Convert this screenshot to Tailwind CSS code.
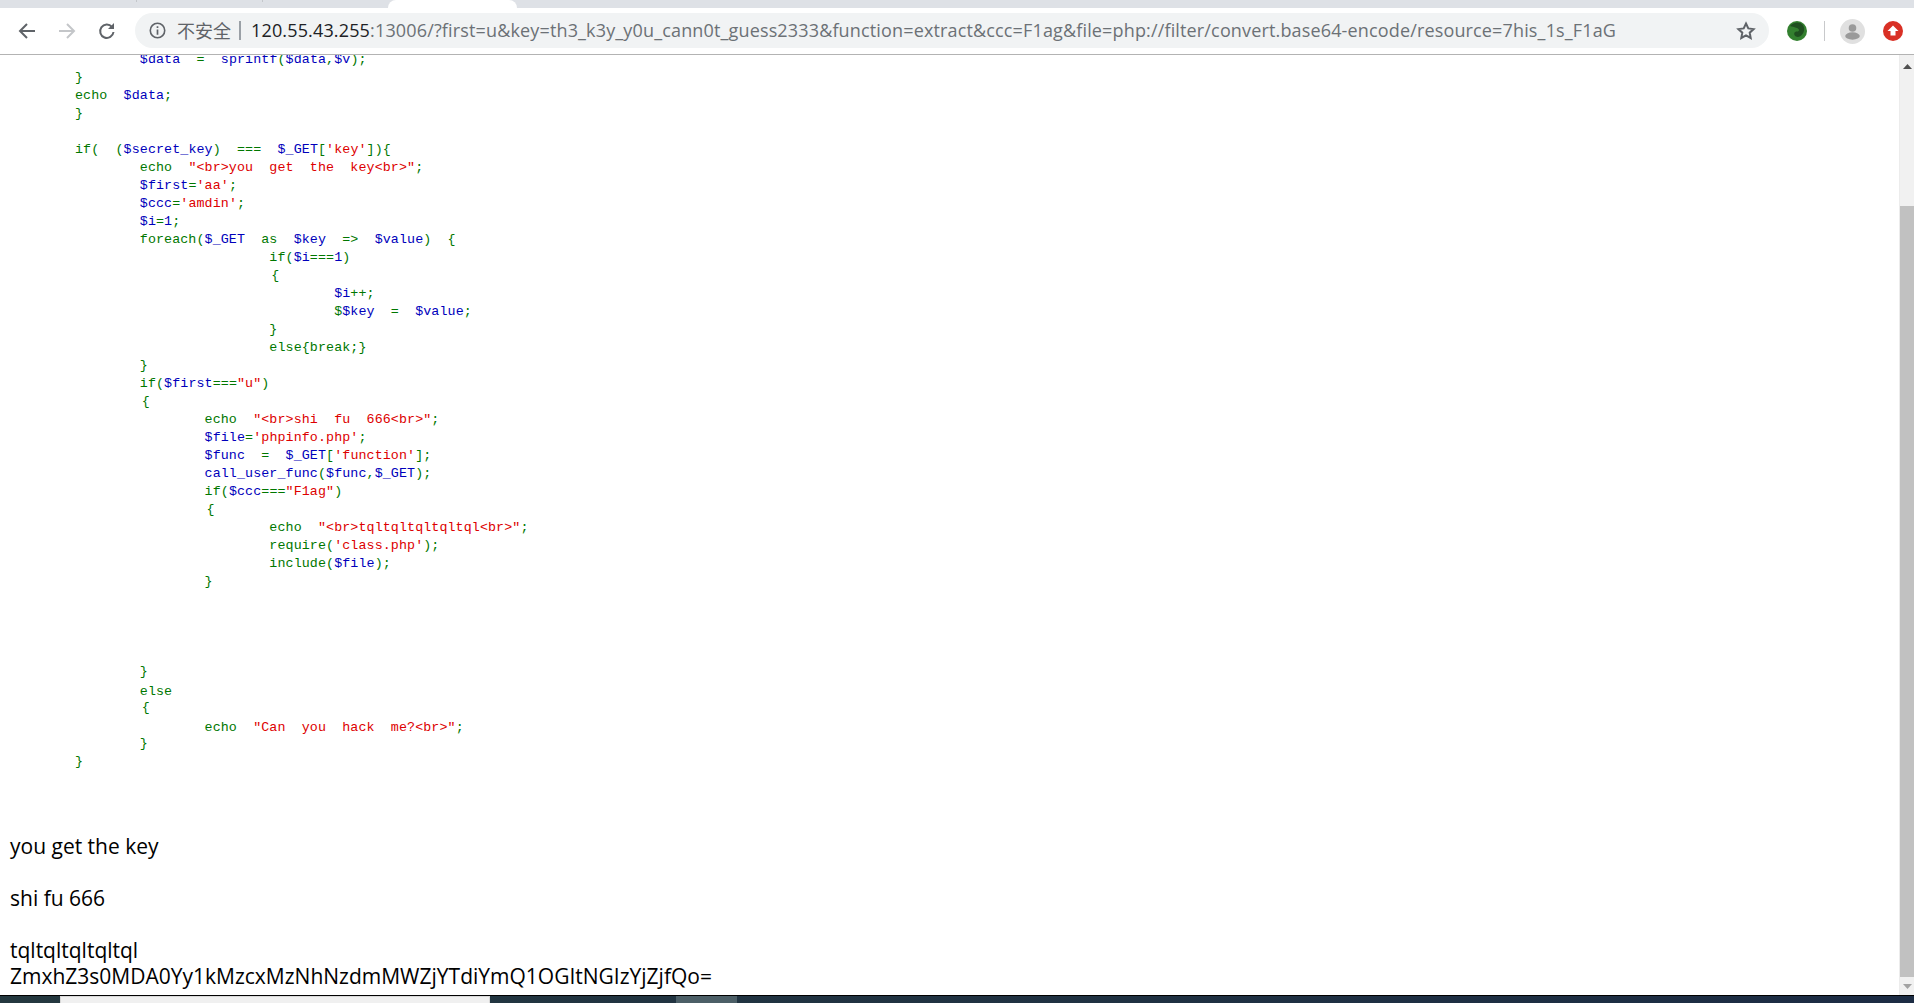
<!DOCTYPE html>
<html>

<head>
    <title>120.55.43.255:13006</title>
    <meta charset="utf-8">
    <script src="https://cdn.jsdelivr.net/npm/@tailwindcss/browser@4"></script>
</head>

<body class="bg-white h-[1003px] w-[1914px] overflow-hidden flex flex-col">
    <!-- tab strip -->
    <div class="h-[8px] bg-[#dee1e6] flex shrink-0">
        <div class="w-[137px] h-[2px] border-r border-[#c4c7cb]"></div>
        <div class="w-[126px] h-[2px] border-r border-[#c4c7cb]"></div>
        <div class="w-[125px]"></div>
        <div class="w-[129px] bg-white rounded-t-lg"></div>
    </div>

    <!-- toolbar -->
    <div class="h-[47px] shrink-0 bg-white border-b border-[#b3b3b3] flex items-start pt-[5px] pl-[17px]">
        <svg class="w-[20px] h-[20px] mt-[8px]" viewBox="0 0 20 20" fill="none" stroke="#5f6368" stroke-width="2"><path d="M18 10H3M10 3l-7 7 7 7"/></svg>
        <svg class="w-[20px] h-[20px] mt-[8px] ml-[20px]" viewBox="0 0 20 20" fill="none" stroke="#c4c6c9" stroke-width="2"><path d="M2 10h15M10 3l7 7-7 7"/></svg>
        <svg class="w-[20px] h-[20px] mt-[8px] ml-[20px]" viewBox="0 0 20 20" fill="none" stroke="#5f6368" stroke-width="2"><path d="M16.5 11a6.7 6.7 0 1 1-1.6-5.2"/><path d="M17 2v6h-6" fill="#5f6368" stroke="none"/></svg>
        <div class="ml-[18px] w-[1634px] h-[35px] rounded-full bg-[#f1f3f4] flex items-center pl-[14px] pr-[13px]">
            <svg class="w-[17px] h-[17px] shrink-0" viewBox="0 0 16 16" fill="none"><circle cx="8" cy="8" r="6.8" stroke="#5f6368" stroke-width="1.5"/><path d="M8 4v1.7M8 7v5" stroke="#5f6368" stroke-width="1.6"/></svg>
            <span class="ml-[11px] text-[18px] text-[#5f6368] font-['Noto_Sans_CJK_SC',sans-serif]">不安全</span>
            <span class="ml-[8px] w-[2px] h-[19px] bg-[#9aa0a6]"></span>
            <span class="ml-[10px] text-[18px] tracking-[0.15px] whitespace-nowrap font-['Open_Sans',sans-serif] text-[#6c7176]"><span class="text-[#202124]">120.55.43.255</span>:13006/?first=u&amp;key=th3_k3y_y0u_cann0t_guess2333&amp;function=extract&amp;ccc=F1ag&amp;file=php://filter/convert.base64-encode/resource=7his_1s_F1aG</span>
            <svg class="w-[20px] h-[20px] ml-auto" viewBox="0 0 20 20" fill="none" stroke="#5f6368" stroke-width="2"><path d="M10 2.5l2.3 4.9 5.3.7-3.9 3.6 1 5.3-4.7-2.6-4.7 2.6 1-5.3-3.9-3.6 5.3-.7z"/></svg>
        </div>
        <svg class="w-[20px] h-[20px] mt-[8px] ml-[18px]" viewBox="0 0 20 20"><circle cx="10" cy="10" r="10" fill="#33802f"/><path d="M3 5c3-4 10-5 13-1 3 5 0 11-5 12-3 0-5-3-3-5 2-1 4 0 4-2s-5-3-9-4z" fill="#1f4f20"/></svg>
        <span class="w-[1px] h-[20px] mt-[8px] ml-[17px] bg-[#c8c9cb]"></span>
        <svg class="w-[25px] h-[25px] mt-[6px] ml-[15px]" viewBox="0 0 25 25"><circle cx="12.5" cy="12.5" r="12.5" fill="#e0e0e0"/><circle cx="12.5" cy="9" r="3.8" fill="#9a9a9a"/><ellipse cx="12.5" cy="17" rx="7.3" ry="3.7" fill="#9a9a9a"/></svg>
        <svg class="w-[20px] h-[20px] mt-[8px] ml-[18px]" viewBox="0 0 20 20"><circle cx="10" cy="10" r="10" fill="#d93025"/><path d="M10 4.5l5.5 5.5h-3v4.5h-5V10h-3z" fill="#fff"/></svg>
    </div>

    <!-- page + scrollbar -->
    <div class="flex-1 min-h-0 flex">
        <main class="flex-1 min-w-0 overflow-hidden pl-[10px]">
            <div class="pl-[65px] -mt-[4px] flex flex-col whitespace-pre text-[13.33px] tracking-[0.1px] leading-[18px] font-['Liberation_Mono',monospace] text-[#007700]">
<div>        <span class="text-[#0000bb]">$data</span>  =  <span class="text-[#0000bb]">sprintf</span>(<span class="text-[#0000bb]">$data</span>,<span class="text-[#0000bb]">$v</span>);</div>
<div>}</div>
<div>echo  <span class="text-[#0000bb]">$data</span>;</div>
<div>}</div>
<div> </div>
<div>if(  (<span class="text-[#0000bb]">$secret_key</span>)  ===  <span class="text-[#0000bb]">$_GET</span>[<span class="text-[#dd0000]">'key'</span>]){</div>
<div>        echo  <span class="text-[#dd0000]">"&lt;br&gt;you  get  the  key&lt;br&gt;"</span>;</div>
<div>        <span class="text-[#0000bb]">$first</span>=<span class="text-[#dd0000]">'aa'</span>;</div>
<div>        <span class="text-[#0000bb]">$ccc</span>=<span class="text-[#dd0000]">'amdin'</span>;</div>
<div>        <span class="text-[#0000bb]">$i</span>=<span class="text-[#0000bb]">1</span>;</div>
<div>        foreach(<span class="text-[#0000bb]">$_GET</span>  as  <span class="text-[#0000bb]">$key</span>  =&gt;  <span class="text-[#0000bb]">$value</span>)  {</div>
<div>                        if(<span class="text-[#0000bb]">$i</span>===<span class="text-[#0000bb]">1</span>)</div>
<div>                        <span class="ml-[2px]">{</span></div>
<div>                                <span class="text-[#0000bb]">$i</span>++;</div>
<div>                                $<span class="text-[#0000bb]">$key</span>  =  <span class="text-[#0000bb]">$value</span>;</div>
<div>                        }</div>
<div>                        else{break;}</div>
<div>        }</div>
<div>        if(<span class="text-[#0000bb]">$first</span>===<span class="text-[#dd0000]">"u"</span>)</div>
<div>        <span class="ml-[2px]">{</span></div>
<div>                echo  <span class="text-[#dd0000]">"&lt;br&gt;shi  fu  666&lt;br&gt;"</span>;</div>
<div>                <span class="text-[#0000bb]">$file</span>=<span class="text-[#dd0000]">'phpinfo.php'</span>;</div>
<div>                <span class="text-[#0000bb]">$func</span>  =  <span class="text-[#0000bb]">$_GET</span>[<span class="text-[#dd0000]">'function'</span>];</div>
<div>                <span class="text-[#0000bb]">call_user_func</span>(<span class="text-[#0000bb]">$func</span>,<span class="text-[#0000bb]">$_GET</span>);</div>
<div>                if(<span class="text-[#0000bb]">$ccc</span>===<span class="text-[#dd0000]">"F1ag"</span>)</div>
<div>                <span class="ml-[2px]">{</span></div>
<div>                        echo  <span class="text-[#dd0000]">"&lt;br&gt;tqltqltqltqltql&lt;br&gt;"</span>;</div>
<div>                        require(<span class="text-[#dd0000]">'class.php'</span>);</div>
<div>                        include(<span class="text-[#0000bb]">$file</span>);</div>
<div>                }</div>
<div> </div>
<div> </div>
<div> </div>
<div> </div>
<div>        }</div>
<div class="translate-y-[2px]">        else</div>
<div>        <span class="ml-[2px]">{</span></div>
<div class="translate-y-[2px]">                echo  <span class="text-[#dd0000]">"Can  you  hack  me?&lt;br&gt;"</span>;</div>
<div>        }</div>
<div>}</div>
            </div>
            <div class="mt-[62px] text-[21px] leading-[26px] font-['Open_Sans',sans-serif] text-black">
                <p>you get the key</p>
                <p class="mt-[26px]">shi fu 666</p>
                <p class="mt-[26px]">tqltqltqltqltql</p>
                <p>ZmxhZ3s0MDA0Yy1kMzcxMzNhNzdmMWZjYTdiYmQ1OGItNGIzYjZjfQo=</p>
            </div>
        </main>
        <div class="w-[15px] shrink-0 bg-[#f1f1f1] flex flex-col items-center border-l border-[#ececec]">
            <svg class="w-[9px] h-[5px] mt-[9px] shrink-0" viewBox="0 0 9 5"><path d="M4.5 0L9 5H0z" fill="#505050"/></svg>
            <div class="w-[14px] h-[771px] mt-[137px] bg-[#c1c1c1] shrink-0"></div>
            <svg class="w-[9px] h-[5px] mt-[7px] shrink-0" viewBox="0 0 9 5"><path d="M0 0h9L4.5 5z" fill="#a3a3a3"/></svg>
        </div>
    </div>

    <!-- taskbar edge -->
    <div class="h-[8px] shrink-0 border-t border-black bg-linear-to-r from-[#24383f] to-[#1c2c44] flex">
        <div class="w-[60px]"></div>
        <div class="w-[430px] bg-[#f0f0f0] border border-b-0 border-[#d8d8d8]"></div>
        <div class="w-[186px]"></div>
        <div class="w-[61px] bg-[#4c5f67]"></div>
    </div>
</body>

</html>
